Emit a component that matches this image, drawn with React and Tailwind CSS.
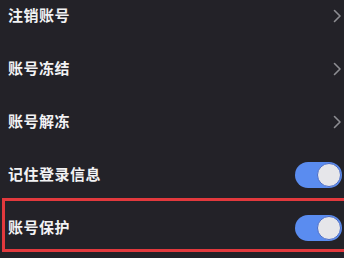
import React from 'react';

const rows = [
  { label: '注销账号', type: 'link' },
  { label: '账号冻结', type: 'link' },
  { label: '账号解冻', type: 'link' },
  { label: '记住登录信息', type: 'toggle' },
  { label: '账号保护', type: 'toggle', marked: true },
];

function Chevron() {
  return (
    <svg width="9" height="14" viewBox="0 0 9 14">
      <polyline points="1.5,1.5 7,7 1.5,12.5" fill="none" stroke="#8d8d92" strokeWidth="1.6" strokeLinecap="round" strokeLinejoin="round" />
    </svg>
  );
}

function Toggle() {
  return (
    <div className="w-[47px] h-[26px] rounded-full bg-[#5a8cf0] flex items-center justify-end p-[1px]">
      <div className="w-[24px] h-[24px] rounded-full bg-[#e6e6ea] border border-[#4a6cc8]" />
    </div>
  );
}

export default function App() {
  return (
    <div className="w-[344px] h-[258px] overflow-hidden bg-[#232228]" style={{ fontFamily: '"Noto Sans CJK SC", "Noto Sans", sans-serif' }}>
      <div className="-mt-[11px]">
        {rows.map((row) => (
          <div key={row.label} className="relative h-[53px] flex items-center justify-between pl-[8px] pr-[2px]">
            <span className="text-[15px] font-semibold text-[#f2f2f4] tracking-[0.5px]">{row.label}</span>
            {row.type === 'link' ? <Chevron /> : <Toggle />}
            {row.marked && (
              <div className="absolute top-[-3px] bottom-[2px] left-[2px] right-[-10px] border-[3px] border-[#e2393d] pointer-events-none" />
            )}
          </div>
        ))}
      </div>
    </div>
  );
}
